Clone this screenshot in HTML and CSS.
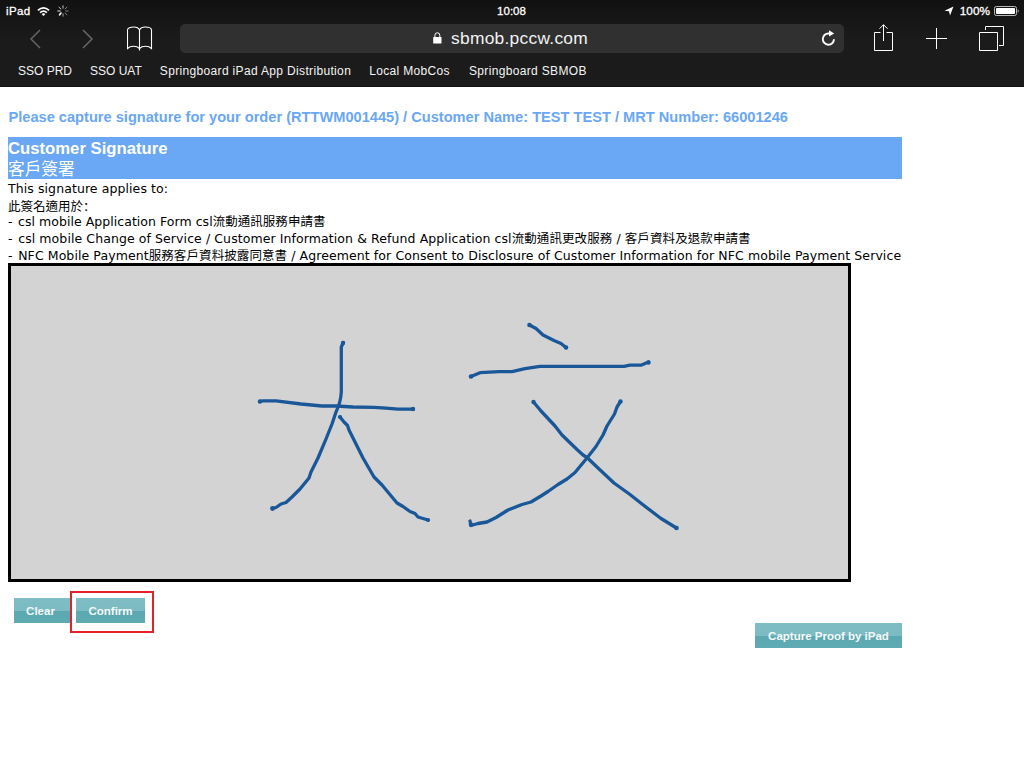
FILE: index.html
```html
<!DOCTYPE html>
<html lang="zh-Hant">
<head>
<meta charset="utf-8">
<title>Customer Signature</title>
<link rel="stylesheet" href="styles.css">
</head>
<body>
<header class="browser">
  <div class="status">
    <div class="status-left">
      <span class="device">iPad</span>
      <svg class="wifi" width="13" height="11" viewBox="0 0 14 11"><g fill="none" stroke="#fff" stroke-width="1.9"><path d="M1 4.2Q7-1.1 13 4.2"/><path d="M3.3 6.7Q7 3.5 10.7 6.7"/></g><path d="M4.9 8.2Q7 6.5 9.1 8.2L7 10.4z" fill="#fff"/></svg>
      <svg class="spinner" width="12" height="12" viewBox="0 0 12 12" stroke="#fff" stroke-width="1" stroke-linecap="round"><path d="M6 .8v2.4" opacity=".75"/><path d="M10 2.200 8.100 4" opacity=".5"/><path d="M11.200 6H8.800" opacity=".45"/><path d="M10 9.800 8.100 8" opacity=".45"/><path d="M6 11.200V8.800" opacity=".6"/><path d="M2.600 9.800 4 8" stroke-width="1.600"/><path d="M.8 6h2.400" opacity=".9"/><path d="M2 2.200 3.900 4" opacity=".8"/></svg>
    </div>
    <span class="clock">10:08</span>
    <div class="status-right">
      <svg width="10" height="10" viewBox="0 0 10 10"><path d="M9.500.500 6 9.500 5 5.200.500 4.800z" fill="#fff"/></svg>
      <span class="percent">100%</span>
      <svg class="battery" width="25" height="10" viewBox="0 0 25 10"><rect x=".5" y=".5" width="22" height="9" rx="1.8" fill="none" stroke="#b8b8b8"/><rect x="2" y="2" width="19" height="6" rx=".7" fill="#fff"/><path d="M23.7 3.2q1 .6 1 1.8t-1 1.8z" fill="#b8b8b8"/></svg>
    </div>
  </div>
  <div class="toolbar">
    <svg class="back" width="12" height="20" viewBox="0 0 12 20"><path d="M10 1 1 10 10 19" fill="none" stroke="#666" stroke-width="1.5"/></svg>
    <svg class="forward" width="12" height="20" viewBox="0 0 12 20"><path d="M1 1 10 10 1 19" fill="none" stroke="#666" stroke-width="1.5"/></svg>
    <svg class="book" width="27" height="26" viewBox="0 0 27 26"><path d="M12.500 4V24.500M12.500 4C11.500 2 9.500 1 7 1 3.500 1 .500 2 .500 4v18.500c3-2.800 9-3 12 0 3-3 9-2.800 12 0V4c0-2-3-3-6.500-3-2.500 0-4.500 1-5.500 3" fill="none" stroke="#fff" stroke-width="1.100"/></svg>
    <div class="address">
      <svg class="lock" width="9" height="13" viewBox="0 0 9 13"><rect x=".2" y="5" width="8.300" height="6.500" rx=".6" fill="#fff"/><path d="M1.900 5.300V3.200Q1.900.8 4.350.8T6.800 3.200v2.100" fill="none" stroke="#fff" stroke-width="1"/></svg>
      <span class="host">sbmob.pccw.com</span>
      <svg class="reload" width="15" height="17" viewBox="0 0 15 17"><path d="M9.500 3.500H7.500A5.600 5.600 0 1 0 13 9.300" fill="none" stroke="#fff" stroke-width="1.900"/><path d="M8 .3 13.200 3.600 8 6.600z" fill="#fff"/></svg>
    </div>
    <svg class="share" width="20" height="28" viewBox="0 0 20 28"><path d="M7.500 8.500H1.500v18h18v-18H13.500M10.500 17V.7M6.500 4.700l4-4 4 4" fill="none" stroke="#fff"/></svg>
    <svg class="plus" width="22" height="22" viewBox="0 0 22 22"><path d="M10.500 0v21M0 10.500h21" fill="none" stroke="#fff"/></svg>
    <svg class="tabs" width="26" height="26" viewBox="0 0 26 26"><path d="M.5 7.500h18v18H.5zM6.500 5V1.500h18v19H20" fill="none" stroke="#fff"/></svg>
  </div>
  <nav class="bookmarks"><a class="caps">SSO PRD</a><a class="caps">SSO UAT</a><a>Springboard iPad App Distribution</a><a>Local MobCos</a><a class="last">Springboard SBMOB</a></nav>
</header>
<main class="page">
  <h1>Please capture signature for your order (RTTWM001445) / Customer Name: TEST TEST / MRT Number: 66001246</h1>
  <section class="banner">
    <div class="en">Customer Signature</div>
    <div class="zh">客戶簽署</div>
  </section>
  <div class="terms">
    <div>This signature applies to:</div>
    <div class="lead">此簽名適用於<span class="colon" lang="zh-Hans">：</span></div>
    <div class="tight"><span class="dash">-</span> csl mobile Application Form csl流動通訊服務申請書</div>
    <div><span class="dash">-</span> csl mobile Change of Service / Customer Information &amp; Refund Application csl流動通訊更改服務 / 客戶資料及退款申請書</div>
    <div><span class="dash">-</span> NFC Mobile Payment服務客戶資料披露同意書 / Agreement for Consent to Disclosure of Customer Information for NFC mobile Payment Service</div>
  </div>
  <div class="pad">
    <svg width="837" height="313" viewBox="11 266 837 313" fill="none" stroke="#1a5799" stroke-width="3.300" stroke-linecap="round" stroke-linejoin="round">
      <path d="M343.300 342.500 341.300 347V392Q340.800 402 336 412L332 424 326 439 318 458 311 472 309 478 300 489 292 497 286 502.500 281 504 276 507.500 272.500 508.500"/>
      <path d="M259.500 401.500 263 400.800H276L301 404 322 406H336L353 407 374 407.300 386 408.200 398 409.200H413.500"/>
      <path d="M340 417 344 422 347.500 425.500 349 430 363 458 374 477 382 485 397 503 403 506.500 410 511.500 415 513.500 418 517 428 520"/>
      <path d="M529.500 325 536 328.500 543 335 554 340.500 561 343.500 566 347.500"/>
      <path d="M471 376.500 480 372.700 499 371.600H512L525 368.700 540 366.300H624L630 365.200H641L648.500 362"/>
      <path d="M620.500 401.500 617 407 614.500 414 607 426 603 435 596 446.500 587 458 575 472.500 567 479 558 484.500 548 491.500 541 496 531 502 522 504.500 508 510 496 517.500 487 522 478 523.500 471 525.500 470 521"/>
      <path d="M533.500 402 541 411 555 426 562 435 577 449.500 583 455 587 457.500 598 468 614 483 630 494.500 642 504 661 518.500 676.500 528"/>
      <g fill="#1a5799" stroke="none"><circle cx="343" cy="343" r="2.200"/><circle cx="260" cy="401.500" r="2.200"/><circle cx="413" cy="409" r="2.200"/><circle cx="272.500" cy="508.500" r="2.400"/><circle cx="340" cy="417" r="2.100"/><circle cx="428" cy="520" r="2.100"/><circle cx="529.500" cy="325" r="2.300"/><circle cx="566" cy="347.500" r="2.300"/><circle cx="471" cy="376.500" r="2.300"/><circle cx="648.500" cy="362.500" r="2.200"/><circle cx="620.500" cy="401.500" r="2.200"/><circle cx="471" cy="524.500" r="2.300"/><circle cx="533.500" cy="402" r="2.200"/><circle cx="676.500" cy="528" r="2.300"/></g>
    </svg>
  </div>
  <div class="actions"><button class="btn clear">Clear</button><div class="highlight"><button class="btn confirm">Confirm</button></div></div>
  <div class="proof"><button class="btn capture">Capture Proof by iPad</button></div>
</main>
</body>
</html>
```
FILE: styles.css
```css
* { box-sizing: border-box; }
body { margin: 0; background: #fff; color: #000; font-family: "Liberation Sans", "Noto Sans CJK TC", sans-serif; }
svg { display: block; flex: none; }
a, h1, .terms div { white-space: nowrap; }

.browser { height: 87px; background: linear-gradient(#111, #1b1b1b 40px, #1b1b1b 86px, #111 86px); color: #fff; }
.status { display: grid; grid-template-columns: 1fr auto 1fr; align-items: center; height: 22px; padding: 0 5px 0 6px; font-size: 12px; line-height: 22px; -webkit-text-stroke: .3px #fff; }
.status-left, .status-right { display: flex; align-items: center; }
.status-right { justify-content: flex-end; }
.device { font-size: 11.5px; letter-spacing: .4px; }
.clock { margin: 0 2px 0 0; font-size: 11.5px; }
.wifi { margin-left: 6px; }
.spinner { margin-left: 7px; }
.percent { margin: 0 4px 0 6px; font-size: 11.8px; }
.toolbar { display: flex; align-items: flex-start; height: 36px; padding: 2px 19px 0 30px; }
.back { margin-top: 5px; }
.forward { margin: 5px 0 0 40px; }
.book { margin: 2px 0 0 33px; }
.address { display: flex; align-items: center; width: 664px; height: 29px; margin-left: 26px; padding: 0 8px 0 253px; border-radius: 5px; background: #303030; }
.host { margin-left: 9px; font-size: 17.4px; line-height: 29px; letter-spacing: .26px; color: #f2f2f2; }
.reload { margin-left: auto; }
.share { margin: 0 0 0 29px; }
.plus { margin: 4px 0 0 33px; }
.tabs { margin: 1px 0 0 31px; }
.bookmarks { display: flex; gap: 18px; padding: 5px 0 0 18px; font-size: 12px; line-height: 16px; letter-spacing: .34px; color: #f4f4f4; }
.caps { letter-spacing: 0; }
.last { margin-left: 1px; }

.page { width: 894px; margin-left: 8px; }
h1 { height: 50px; margin: 0; padding: 20px 0 0 .5px; font-size: 14.62px; line-height: 20px; font-weight: bold; color: #6aa7f4; }
.banner { height: 42px; padding-top: 1px; background: #6aa7f4; color: #fff; font-size: 16.7px; line-height: 21px; }
.banner div { height: 21px; }
.en { font-weight: bold; }
.terms { height: 84.500px; padding: 2px 0 0; font-family: "DejaVu Sans", "Noto Sans CJK TC", sans-serif; font-size: 12.5px; line-height: 16.700px; letter-spacing: .088px; }
.terms div { height: 16.700px; }
.terms .lead { line-height: 15.7px; letter-spacing: 0; }
.terms .tight { letter-spacing: .04px; }
.dash { margin-right: 1.5px; }
.colon { font-family: "Noto Sans CJK SC", sans-serif; }
.pad { width: 843px; height: 319px; border: 3px solid #000; background: #d3d3d3; margin-top: -.5px; }
.actions { display: flex; align-items: flex-start; height: 41px; padding: 9px 0 0 6px; }
.btn { height: 25px; border: 0; border-radius: 0; padding: 1px 0 0; font: bold 11.500px/25px "Liberation Sans", sans-serif; color: #f5fafa; background: linear-gradient(#7fbdc4, #7bbbc2 13px, #5ca8b1 13px, #5fabb4); text-align: center; }
.clear { width: 56px; margin-top: 7px; padding-right: 3px; }
.highlight { width: 84px; height: 42px; border: 2px solid #e6202a; padding: 5px 4px; display: flex; }
.confirm { width: 69px; }
.proof { display: flex; justify-content: flex-end; }
.capture { width: 147px; }
```
